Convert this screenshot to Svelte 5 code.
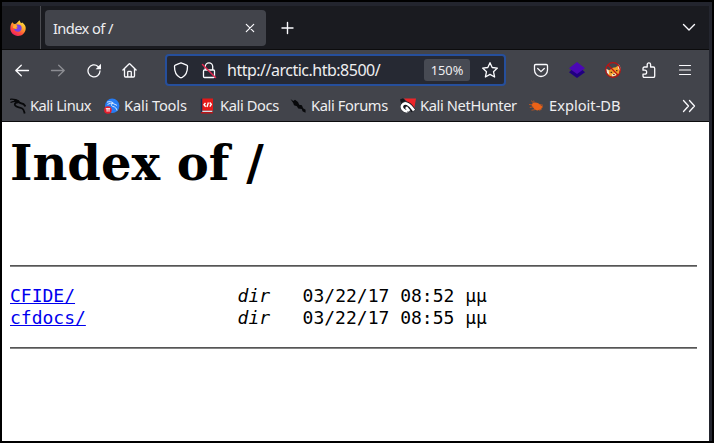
<script>
  const rows = [
    { name: 'CFIDE/', gap: 15, date: '03/22/17 08:52 μμ' },
    { name: 'cfdocs/', gap: 14, date: '03/22/17 08:55 μμ' }
  ];
</script>

<div class="window">
  <div class="tabs">
    <div class="pinned">
      <svg width="16" height="16" viewBox="0 0 16 16">
        <defs>
          <linearGradient id="flame" x1="0.85" y1="0" x2="0.25" y2="1">
            <stop offset="0" stop-color="#fff04a" />
            <stop offset="0.4" stop-color="#ffa92b" />
            <stop offset="0.7" stop-color="#ff4f3b" />
            <stop offset="1" stop-color="#ee1767" />
          </linearGradient>
        </defs>
        <path fill="url(#flame)" d="M2.300 2.200 4 4 6 3.700 9.500 0.200 11 3.200 12.300 2.600C14.800 4.500 16 6.500 15.700 9 15.200 13.200 12 16 8 16 3.600 16 .3 12.600.3 8.600.3 6 1 3.700 2.300 2.200Z" />
        <path fill="#7542e5" d="M5 6c1-2 5.500-2 6.500.8.7 3-1.200 5-3.500 5-2 0-3.600-1.300-4-3l2 .3 2-1.300-2.500-.7Z" />
        <path fill="#ffb42e" d="M3.500 5.300 6.500 5l1 1.500-1.500.7 1 1.300-1.800.2-2.300-1Z" />
      </svg>
    </div>
    <div class="tab">
      <span>Index of /</span>
      <svg width="10" height="10" viewBox="0 0 10 10" class="line"><path d="m1.300 1.300 7.400 7.400M8.700 1.300 1.300 8.700" /></svg>
    </div>
    <svg class="line plus" width="14" height="14" viewBox="0 0 14 14"><path stroke-width="1.400" d="M6.500 1.500v11M1 7h11" /></svg>
    <svg class="line down" width="14" height="9" viewBox="0 0 14 9"><path stroke-width="1.400" d="m1.500 1.500 5.500 5.500 5.500-5.500" /></svg>
  </div>

  <div class="nav">
    <div class="buttons">
      <svg class="line" width="16" height="16" viewBox="0 0 16 16"><path stroke-width="1.300" d="M14.500 8.500H2M7.300 3.200 1.800 8.500l5.500 5.300" /></svg>
      <svg class="line dim" width="16" height="16" viewBox="0 0 16 16"><path stroke-width="1.300" d="M1.500 8.500h12.700M8.700 3.200l5.500 5.300-5.500 5.300" /></svg>
      <svg class="line" width="16" height="16" viewBox="0 0 16 16"><path stroke-width="1.300" d="M14 9a6 6 0 1 1-2-4.600l1.500 1.400" /><path d="M15 1.800v5.400H9.600Z" fill="#fbfbfe" stroke="none" /></svg>
      <svg class="line" width="16" height="16" viewBox="0 0 16 16"><path stroke-width="1.300" d="m.9 8 6.100-6q.5-.5 1 0l6.100 6M2.500 6.800v7.200q0 1 1 1h8q1 0 1-1V6.800M5.700 15v-4.800q0-.8.8-.8h2q.8 0 .8.800V15" /></svg>
    </div>
    <div class="urlbar">
      <svg class="line shield" width="16" height="17" viewBox="0 0 16 17"><path stroke-width="1.300" d="M7.200 1.200q.8-.4 1.600 0l4.900 1.900q.8.3.8 1.200c.1 5-2 9.400-5.400 11.200q-1.100.5-2.200 0C3.500 13.700 1.400 9.300 1.500 4.300q0-.9.8-1.200Z" /></svg>
      <svg class="line lock" width="16" height="17" viewBox="0 0 16 17"><path stroke-width="1.300" d="M4.300 7.500V4.500a3.600 3.600 0 0 1 7.400 0V7.500M3.500 8h9q1 0 1 1v5.500q0 1-1 1h-9q-1 0-1-1V9q0-1 1-1Z" /><path stroke="#e22850" stroke-width="1.500" d="m1.500 2.500 13 13" /></svg>
      <span class="url">http://arctic.htb:8500/</span>
      <span class="zoom">150%</span>
      <svg class="line star" width="18" height="18" viewBox="0 0 18 18"><path stroke-width="1.300" d="m9 1.700 2.200 4.800 5.200.6-3.900 3.600 1.100 5.300L9 13.400 4.400 16l1.100-5.300-3.900-3.600 5.200-.6Z" /></svg>
    </div>
    <div class="extensions">
      <svg class="line" width="16" height="16" viewBox="0 0 16 16"><path stroke-width="1.300" d="M2.800 2.500h10.400q1.300 0 1.300 1.300v4.200a6.500 6.500 0 0 1-13 0V3.800q0-1.300 1.300-1.300ZM4.700 6.500 8 9.600l3.300-3.100" /></svg>
      <svg width="16" height="16" viewBox="0 0 16 16"><path fill="#200080" d="m0 10.200 3-2.600h10l3 2.600L8 16Z" /><path fill="#4b08b5" d="m8 0 8 6.200-8 5.800-8-5.800Z" /></svg>
      <svg width="16" height="16" viewBox="0 0 16 16"><path fill="#f2a02b" d="m1.800 7.500 3 .6 3-2.300 3-.5L14 2.700l.8 5-.6 3.800-3.800 2.500-3 .8-4-1.300Z" /><path fill="#f4e7d5" d="m1 6.500 2.800 2 .4 4-2.400-1.500ZM13.500 2l1.800 3v4l-2.200-2.500ZM6.500 12.500l4-1.500.5 2-3.500 1.500Z" /><path fill="#4b2c1b" d="M5.600 9.700h1.500v1.200H5.600ZM11 8h1.500v1.200H11ZM8.200 12h1.500v1H8.200Z" /><circle cx="8" cy="8" r="7.300" fill="none" stroke="#bd1212" stroke-width="1.200" /><path stroke="#bd1212" stroke-width="1.200" d="m3 3 10 10" /></svg>
      <svg class="line" width="16" height="16" viewBox="0 0 16 16"><path stroke-width="1.300" d="M2 8.200V6.500q0-1.500 1.500-1.500h2.700V2.600a1.700 1.700 0 0 1 3.400 0V5h2.700q1.400 0 1.400 1.400v7.700q0 1.400-1.400 1.400H3.400Q2 15.500 2 14.100v-2h1.700a1.900 1.900 0 0 0 0-3.900Z" /></svg>
      <svg class="line" width="16" height="16" viewBox="0 0 16 16"><path stroke-width="1.200" d="M2.500 3.500h11M2.500 8h11M2.500 12.500h11" /></svg>
    </div>
  </div>

  <div class="bookmarks">
    <div class="bookmark linux">
      <svg width="16" height="16" viewBox="0 0 16 16" fill="none" stroke="#08090b"><path stroke-width="1.300" d="M0 1.300c3-.3 6 .1 9 2M.5 4.500c2.500-1.300 5-1.600 8-.8" /><path stroke-width="1.800" d="M4 1.800c3 .3 4.800 1.300 6 3.100l3.500 1.200 2 2.300M9.200 4.400C6 4 4 5.500 5.200 7.600c1.300 2 5 1.300 7.200 3 1.600 1.200 1.600 2.800 2.300 4.900" /></svg>
      <span>Kali Linux</span>
    </div>
    <div class="bookmark tools">
      <svg width="16" height="16" viewBox="0 0 16 16"><circle cx="8.200" cy="7.800" r="7.200" fill="#267cf4" /><path fill="none" stroke="#d8e9ff" stroke-width="1" d="M3 4.200c2.500-1 4.800-.5 6.500.9M3.500 6.600c2-1.400 4-1.700 6-.9l3.500 1.700M9 5.500C6.500 6 7 8 9 8.500c2.500.5 3.500 2 4 4" /><circle cx="3.900" cy="12" r="3.800" fill="#e51d2b" /><path fill="none" stroke="#fff" d="M1.800 10.700h4.400M3.100 10.700v3M5 10.700v3" /></svg>
      <span>Kali Tools</span>
    </div>
    <div class="bookmark docs">
      <svg width="16" height="16" viewBox="0 0 16 16"><path fill="#192b50" d="M.8.7h2v14h-2Z" /><path fill="#e51919" d="M2.300.5H13v12.200H2.300Z" /><path fill="#d5dce3" d="M2.300 12.700h10v1.600h-10Z" /><path fill="#b81418" d="M1 14h12v1.500H1Z" /><path fill="none" stroke="#fff" stroke-width="1.400" d="M5.500 4.800 4 6.800l1.700 2M9.700 4.500l1.600 1.900-1.500 2.300M8.400 4.500 7 9" /></svg>
      <span>Kali Docs</span>
    </div>
    <div class="bookmark forums">
      <svg width="16" height="16" viewBox="0 0 16 16"><path fill="#08090b" d="m.5 1 2.800 2L5 1.800 8 4l1.200 2.700 2.700.5 1.200 3.100 2.500 1.500-.1 3-3-1.500-.7-2.200-3.600-.5-1.300-2.300L4 7.200 3.200 5Z" /></svg>
      <span>Kali Forums</span>
    </div>
    <div class="bookmark hunter">
      <svg width="16" height="16" viewBox="0 0 16 16"><path fill="#ed2529" d="M3.800.5H16L14.300 10Z" /><path fill="#15161b" d="m0 1.500 3-1.300 2.500 2.600L1 5Z" /><path fill="none" stroke="#16171c" stroke-width="5" d="M6 12.500C2 11 1.800 7 5 6c3-.6 6 2.500 8.500 7" /><path fill="none" stroke="#fff" stroke-width="2.600" d="M7.500 13.500C3 13 .9 9.700 2.300 7.200 4.500 3.300 9.500 5.700 14 12.500M9.300 13 6 9.200" /></svg>
      <span>Kali NetHunter</span>
    </div>
    <div class="bookmark exploit">
      <svg width="16" height="16" viewBox="0 0 16 16"><path fill="#ed6217" d="M4 4.700c3-.8 6 0 7.300 2.300l2.900 2-1.800 1 .3 1.600-2.200.1-2 .8C6 12.300 4 10 2.500 7Z" /><path fill="none" stroke="#cc581d" stroke-width=".8" d="M2.500 2.500 4 4.800M0 6.500l3.500.3M.8 9.500l3.500-.7M2.500 12.200l4-.7M5 4 4.700 2.600M11 6.500l3 .8M10 11.500l1 1.300" /></svg>
      <span>Exploit-DB</span>
    </div>
    <svg class="line more" width="14" height="14" viewBox="0 0 14 14"><path stroke-width="1.300" d="m1.500 1.500 5 5.500-5 5.500M7.500 1.500l5 5.500-5 5.500" /></svg>
  </div>

  <main>
    <h1>Index of /</h1>
    <hr />
    <div class="listing">
      {#each rows as row}
        <div><a href={'#' + row.name}>{row.name}</a>{' '.repeat(row.gap)}<i>dir</i>{'   '}{row.date}</div>
      {/each}
    </div>
    <hr />
  </main>
</div>

<style>
  :global(body) { margin: 0; overflow: hidden; }
  * { box-sizing: border-box; }
  svg { display: block; flex: none; }
  .window {
    width: 714px; height: 443px; display: flex; flex-direction: column;
    border: 2px solid #000; background: #23252e; padding: 4px 3px 0 0;
    font-family: "Noto Sans", sans-serif; color: #eeeef0;
  }
  .line { fill: none; stroke: #fbfbfe; stroke-width: 1.200; stroke-linecap: round; stroke-linejoin: round; }
  .dim { opacity: .4; }
  .tabs { height: 44px; flex: none; display: flex; align-items: center; background: #1a1b20; border-bottom: 1px solid #0c0c0d; }
  .pinned { width: 39px; height: 43px; padding: 14px 0 0 8px; border-right: 1px solid #4b4c51; }
  .tab {
    width: 221px; height: 36px; margin-left: 4px; border-radius: 4px; background: #42444b;
    display: flex; align-items: center; justify-content: space-between; padding: 0 11px 0 8px; font-size: 14.670px; letter-spacing: -.6px;
  }
  .plus { margin-left: 15px; }
  .down { margin-left: auto; margin-right: 13px; }
  .nav { height: 40px; flex: none; display: flex; align-items: center; background: #42444b; }
  .buttons { width: 163px; display: flex; gap: 20px; padding-left: 12px; }
  .urlbar { width: 341px; height: 32px; border: 2px solid #264f9c; border-radius: 4px; background: #262933; display: flex; align-items: center; }
  .shield { margin-left: 6px; }
  .lock { margin-left: 12px; }
  .url { width: 197px; margin-left: 10px; font-size: 16px; line-height: 22px; letter-spacing: -.5px; white-space: nowrap; }
  .zoom { width: 46px; height: 22px; border-radius: 3px; background: #474a53; font-size: 12.800px; line-height: 22px; text-align: center; }
  .star { margin-left: 11px; }
  .extensions { display: flex; gap: 20px; margin-left: auto; margin-right: 16px; }
  .bookmarks { height: 32px; flex: none; display: flex; background: #42444b; border-bottom: 1px solid #0c0c0d; padding-left: 8px; font-size: 14.670px; line-height: 30px; }
  .bookmark { display: flex; white-space: nowrap; flex: none; gap: 4px; height: 31px; }
  .bookmark svg { margin-top: 8px; }
  .linux { width: 94px; letter-spacing: -.5px; }
  .tools { width: 96px; letter-spacing: -.15px; }
  .docs { width: 90px; letter-spacing: -.38px; }
  .forums { width: 110px; gap: 5px; letter-spacing: -.38px; }
  .hunter { width: 129px; letter-spacing: -.37px; }
  .exploit { width: 110px; }
  .more { margin: 9px 13px 0 auto; }
  main { flex: 1; background: #fff; color: #000; padding: 13px 12px 0 8px; }
  h1 { margin: 0 0 74px; height: 56px; font: bold 48px/56px "DejaVu Serif", serif; }
  hr { height: 2px; margin: 0; border: 0; border-top: 1px solid #555; border-bottom: 1px solid #858585; }
  .listing { height: 80px; padding-top: 18px; font: 18px/22px "DejaVu Sans Mono", monospace; white-space: pre; }
  .listing div { height: 22px; }
  a { color: #00e; text-decoration: underline; }
</style>
